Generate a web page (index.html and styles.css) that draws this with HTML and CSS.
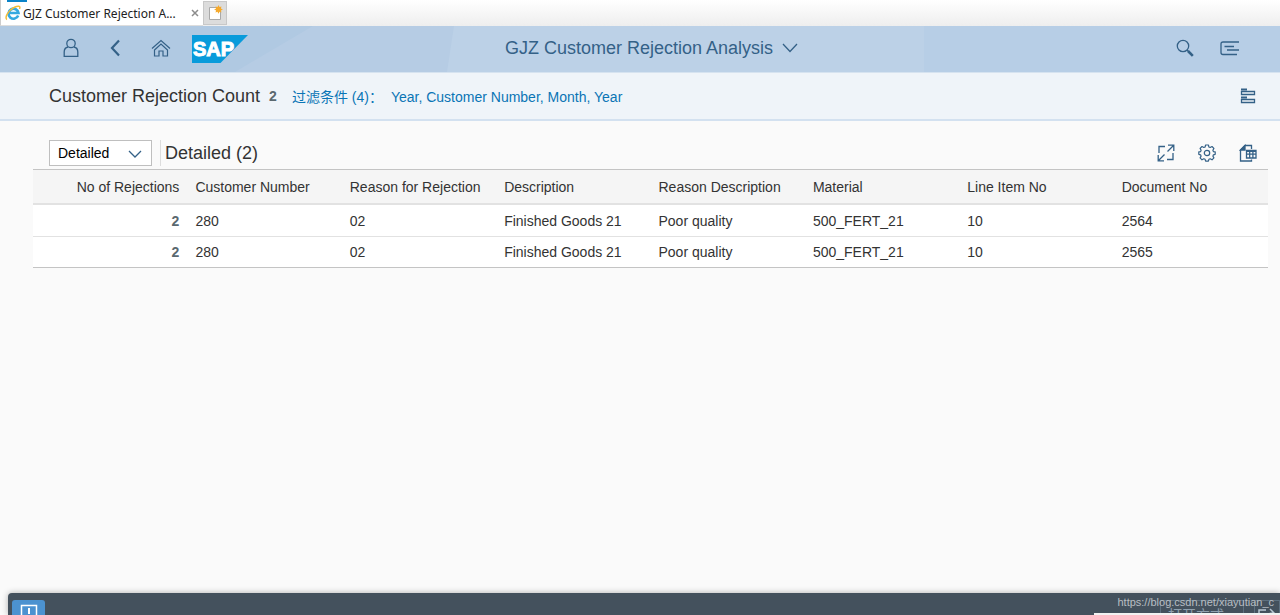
FILE: index.html
```
<!DOCTYPE html>
<html lang="en">
<head>
    <meta charset="UTF-8">
    <meta name="viewport" content="width=device-width, initial-scale=1.0">
    <title>GJZ Customer Rejection Analysis</title>
    <link rel="stylesheet" href="styles.css">
</head>
<body>

    <!-- Browser tabs -->
    <div class="tabs">
        <div class="tab">
            <svg width="16" height="16" viewBox="0 0 16 16">
                <path d="M13.2 10.5A5 5 0 1 1 13.5 8H4" fill="none" stroke="#35a9e0" stroke-width="2.6"/>
                <path d="M2 14.5C-1 13 3.500 5 9 2.500C13 .5 16 .5 14.500 4" fill="none" stroke="#f3bd35" stroke-width="1.500"/>
            </svg>
            <span class="tab-title">GJZ Customer Rejection A...</span>
            <button class="tab-close" aria-label="Close tab">
                <svg width="8" height="8" viewBox="0 0 8 8"><path d="M1 1l6 6M7 1L1 7" stroke="#8c8c8c" stroke-width="1.500"/></svg>
            </button>
        </div>
        <button class="tab-new" aria-label="New tab">
            <svg width="16" height="16" viewBox="0 0 16 16">
                <path d="M2.500 2.500h11v12h-11z" fill="#fff" stroke="#a9a9a9"/>
                <path d="M11.500 0l1 2 2-.6-.6 2 2 1-2 1 .6 2-2-.6-1 2-1-2-2 .6.6-2-2-1 2-1-.6-2 2 .6z" fill="#f5a92c"/>
            </svg>
        </button>
    </div>

    <!-- Shell header -->
    <header class="shell">
        <svg class="shell-bg" viewBox="0 0 1280 46" preserveAspectRatio="none">
            <path d="M0 0h1280v46H0z" fill="#b7cee6"/>
            <path d="M0 0h924v46H0z" fill="#bcd1e7"/>
            <path d="M0 0h454l-7 46H0z" fill="#b6cce4"/>
            <path d="M0 0h313L235 46H0z" fill="#b0c9e2"/>
        </svg>
        <nav class="shell-left">
            <button class="icon" aria-label="User">
                <svg width="16" height="20" viewBox="0 0 16 20" fill="none" stroke="#346187" stroke-width="1.300">
                    <circle cx="8" cy="5.500" r="4.200"/>
                    <path d="M5 9C2.500 9.500 1.200 11.500 1.200 14v4.300h13.600V14c0-2.500-1.300-4.500-3.800-5"/>
                </svg>
            </button>
            <button class="icon" aria-label="Back">
                <svg width="10" height="18" viewBox="0 0 10 18"><path d="M9 1.500L2 9l7 7.500" fill="none" stroke="#346187" stroke-width="2.200"/></svg>
            </button>
            <button class="icon" aria-label="Home">
                <svg width="20" height="18" viewBox="0 0 20 18" fill="none" stroke="#346187" stroke-width="1.200">
                    <path d="M1 9.500L10 1.500l9 8"/>
                    <path d="M3.500 11L10 5l6.500 6v6H12v-5H8v5H3.500z"/>
                </svg>
            </button>
            <svg class="logo" width="56" height="28" viewBox="0 0 56 28">
                <path d="M0 0h56L28.500 28H0z" fill="#089bdb"/>
                <text x="1" y="21" class="logo-text">SAP</text>
            </svg>
        </nav>
        <button class="shell-title">
            GJZ Customer Rejection Analysis
            <svg width="16" height="10" viewBox="0 0 16 10"><path d="M1 1l7 7.500L15 1" fill="none" stroke="#346187" stroke-width="1.300"/></svg>
        </button>
        <div class="shell-right">
            <button class="icon" aria-label="Search">
                <svg width="18" height="18" viewBox="0 0 18 18" fill="none" stroke="#346187">
                    <circle cx="7" cy="7" r="5.700" stroke-width="1.300"/>
                    <path d="M11 11l1.500 1.500" stroke-width="1.300"/>
                    <path d="M12 12l4.800 4.800" stroke-width="2.600"/>
                </svg>
            </button>
            <button class="icon" aria-label="Notifications">
                <svg width="20" height="16" viewBox="0 0 20 16" fill="none" stroke="#346187" stroke-width="1.300">
                    <path d="M19 2H3Q1 2 1 4v8.500q0 2 2 2h14"/>
                    <path d="M4.500 6.500H14M7 10h12"/>
                </svg>
            </button>
        </div>
    </header>

    <!-- Filter bar -->
    <section class="filter-bar">
        <h1>Customer Rejection Count</h1>
        <span class="count">2</span>
        <a href="#" class="filter-link"><span>过滤条件 (4)：</span>Year, Customer Number, Month, Year</a>
        <button class="icon icon-end" aria-label="Show filters">
            <svg width="16" height="16" viewBox="0 0 16 16" fill="none" stroke="#346187" stroke-width="1.300">
                <path d="M1 1.500h6M1 9.500h6" stroke-width="2"/>
                <path d="M1.500 3.500h13v3h-13zM1.500 11.500h13v3h-13z"/>
            </svg>
        </button>
    </section>

    <main class="content">
        <div class="toolbar">
            <div class="view-select">
                <select aria-label="View">
                    <option>Detailed</option>
                </select>
                <svg width="14" height="8" viewBox="0 0 14 8"><path d="M1 1l6 6 6-6" fill="none" stroke="#346187" stroke-width="1.300"/></svg>
            </div>
            <h2>Detailed (2)</h2>
            <div class="tools">
                <button class="icon" aria-label="Full screen">
                    <svg width="18" height="18" viewBox="0 0 18 18" fill="none" stroke="#346187" stroke-width="1.300">
                        <path d="M8 2.500H2V9M10 15.500h6V9"/>
                        <path d="M10.500 7.500L16.500 1.500M11 1.200h5.800V7M7.500 10.500L1.500 16.500M1.200 11v5.800H7"/>
                    </svg>
                </button>
                <button class="icon" aria-label="Settings">
                    <svg width="18" height="18" viewBox="0 0 18 18" fill="none" stroke="#346187" stroke-width="1.200" stroke-linejoin="round">
                        <circle cx="9" cy="9" r="2.700"/>
                        <path d="M7.600 1h2.800l.5 2 1.300.5 1.800-1 1.900 1.900-1 1.800.5 1.400 1.800.3v2.400l-1.800.5-.5 1.300 1 1.800-1.900 1.900-1.800-1-1.300.5-.5 1.800H7.600l-.5-1.800-1.300-.5-1.800 1-1.900-1.900 1-1.800-.5-1.300-1.800-.5V7.900l1.800-.3.5-1.400-1-1.800L4 2.500l1.800 1L7.100 3z"/>
                    </svg>
                </button>
                <button class="icon" aria-label="Export to spreadsheet">
                    <svg width="18" height="18" viewBox="0 0 18 18" fill="none" stroke="#346187" stroke-width="1.300">
                        <path d="M12.500 15.500v1.500H1.500V6L6 1.500h6.500V5"/>
                        <path d="M1.500 6L6 1.500V6z" fill="#346187"/>
                        <path d="M7.500 6.500h9.500v7.500H7.500zM7.500 10.200H17M10.700 7v7M13.900 7v7"/>
                        <path d="M7.500 7H17" stroke-width="2"/>
                    </svg>
                </button>
            </div>
        </div>

        <table class="grid">
            <thead>
                <tr>
                    <th class="num">No of Rejections</th>
                    <th>Customer Number</th>
                    <th>Reason for Rejection</th>
                    <th>Description</th>
                    <th>Reason Description</th>
                    <th>Material</th>
                    <th>Line Item No</th>
                    <th>Document No</th>
                </tr>
            </thead>
            <tbody>
                <tr>
                    <td class="num">2</td>
                    <td>280</td>
                    <td>02</td>
                    <td>Finished Goods 21</td>
                    <td>Poor quality</td>
                    <td>500_FERT_21</td>
                    <td>10</td>
                    <td>2564</td>
                </tr>
                <tr>
                    <td class="num">2</td>
                    <td>280</td>
                    <td>02</td>
                    <td>Finished Goods 21</td>
                    <td>Poor quality</td>
                    <td>500_FERT_21</td>
                    <td>10</td>
                    <td>2565</td>
                </tr>
            </tbody>
        </table>
    </main>

    <!-- Footer, cut off by the window edge -->
    <footer class="footer">
        <button class="message" aria-label="Messages">
            <svg width="18" height="18" viewBox="0 0 18 18" fill="none" stroke="#fff" stroke-width="1.500">
                <path d="M1.500 1.500h15v15h-15z"/>
                <path d="M9 4v6M9 12v2" stroke-width="2"/>
            </svg>
        </button>
        <div class="footer-actions">
            <button class="open-in">打开方式</button>
            <button class="share" aria-label="Share">
                <svg width="24" height="16" viewBox="0 0 24 16" fill="none" stroke="#b9c8d4" stroke-width="1.500">
                    <path d="M11 3H4v12M10 14c1-5 3-8 8-8M15 2l4 4-4 4"/>
                </svg>
            </button>
        </div>
        <span class="watermark">https://blog.csdn.net/xiayutian_c</span>
        <div class="popup"></div>
    </footer>

</body>
</html>
```
FILE: styles.css
```
* {
    box-sizing: border-box;
}

body {
    font-family: "Liberation Sans", Arial, "Noto Sans CJK SC", sans-serif;
    font-size: 14px;
    color: #333;
    margin: 0;
    height: 100vh;
    display: flex;
    flex-direction: column;
    overflow: hidden;
    background-color: #fafafa;
}

h1, h2 {
    margin: 0;
    font-size: 18px;
    font-weight: normal;
}

button {
    font-family: inherit;
    padding: 0;
    border: 0;
    background: none;
}

svg {
    display: block;
    flex: none;
}

.icon {
    display: flex;
}

/* Browser tabs */
.tabs {
    height: 26px;
    flex: none;
    display: flex;
    background: linear-gradient(#fff, #eee);
}

.tab {
    width: 203px;
    display: flex;
    align-items: center;
    padding: 1px 4px 0;
    background: linear-gradient(to right, #0a83c8 20px, transparent 20px) 6px 0 / 20px 2px no-repeat #fff;
    border-left: 1px solid #ccc;
    border-bottom: 1px solid #ddd;
}

.tab-title {
    font-family: "Noto Sans", "Open Sans", sans-serif;
    font-size: 12px;
    color: #222;
    margin-left: 2px;
    white-space: nowrap;
}

.tab-close {
    margin-left: auto;
}

.tab-new {
    width: 24px;
    margin: 1px 0;
    display: flex;
    align-items: center;
    justify-content: center;
    background-color: #dcdcdc;
    border: 1px solid #c8c8c8;
}

/* Shell header */
.shell {
    position: relative;
    height: 46px;
    flex: none;
    display: grid;
    grid-template-columns: 1fr auto 1fr;
    align-items: center;
    padding: 0 40px 2px 63px;
}

.shell-bg {
    position: absolute;
    top: 0;
    left: 0;
    width: 100%;
    height: 100%;
    z-index: -1;
}

.shell-left {
    display: flex;
    align-items: center;
    gap: 31px;
}

.logo {
    margin: 2px 0 0 -10px;
}

.logo-text {
    font-size: 20px;
    font-weight: bold;
    fill: #fff;
    stroke: #fff;
}

.shell-title {
    display: flex;
    align-items: center;
    gap: 9px;
    font-size: 18px;
    color: #346187;
}

.shell-right {
    display: flex;
    align-items: center;
    justify-content: flex-end;
    gap: 26px;
}

/* Filter bar */
.filter-bar {
    height: 49px;
    flex: none;
    display: flex;
    align-items: center;
    padding: 0 24px 0 49px;
    background-color: #eff4f9;
    border-top: 1px solid #d6e3f0;
    border-bottom: 2px solid #d3e1f0;
}

.count {
    margin: 0 15px 0 9px;
    font-weight: bold;
    color: #5a686f;
}

.filter-link {
    display: flex;
    align-items: baseline;
    gap: 8px;
    color: #0a75b5;
    text-decoration: none;
}

.icon-end {
    margin-left: auto;
}

/* Table */
.content {
    flex: 1;
    padding: 15px 12px 0 33px;
}

.toolbar {
    height: 33px;
    display: flex;
    align-items: center;
    padding: 0 11px 0 16px;
}

.view-select {
    position: relative;
    width: 103px;
}

.view-select select {
    width: 100%;
    height: 26px;
    padding: 0 8px;
    font-family: inherit;
    font-size: 14px;
    color: #000;
    background-color: #fff;
    border: 1px solid #bfbfbf;
    border-radius: 0;
    appearance: none;
}

.view-select svg {
    position: absolute;
    top: 10px;
    right: 10px;
    pointer-events: none;
}

.toolbar h2 {
    margin-left: 8px;
    padding-left: 4px;
    border-left: 1px solid #ddd;
    line-height: 26px;
}

.tools {
    margin-left: auto;
    display: flex;
    gap: 23px;
}

.grid {
    width: 100%;
    table-layout: fixed;
    border-collapse: separate;
    border-spacing: 0;
    border-top: 1px solid #c4c4c4;
}

.grid th, .grid td {
    padding: 0 8px;
    text-align: left;
    white-space: nowrap;
}

.grid th {
    height: 35px;
    font-weight: normal;
    background-color: #f5f5f5;
    border-bottom: 2px solid #e2e2e2;
}

.grid td {
    height: 32px;
    background-color: #fff;
    border-bottom: 1px solid #e2e2e2;
}

.grid tbody tr:last-child td {
    height: 31px;
    border-bottom-color: #c4c4c4;
}

.grid .num {
    text-align: right;
}

.grid td.num {
    font-weight: bold;
    color: #5a686f;
}

/* Footer */
.footer {
    position: relative;
    height: 22px;
    flex: none;
    margin-left: 8px;
    padding: 7px 0 0 4px;
    display: flex;
    align-items: flex-start;
    justify-content: space-between;
    overflow: hidden;
    background-color: #44515d;
    border-radius: 4px 0 0 0;
    box-shadow: 0 0 6px rgba(0, 0, 0, 0.3);
}

.message {
    width: 33px;
    height: 30px;
    padding-top: 4px;
    display: flex;
    justify-content: center;
    background-color: #4c92d0;
    border-radius: 3px;
}

.footer-actions {
    display: flex;
    gap: 10px;
}

.footer-actions button {
    height: 30px;
    border: 1px solid #5d7080;
}

.open-in {
    width: 84px;
    padding-right: 12px;
    font-size: 14px;
    line-height: 20px;
    color: #8fa0ae;
}

.watermark {
    position: absolute;
    top: 3px;
    right: 6px;
    font-size: 11px;
    color: #b8bec3;
}

.popup {
    position: absolute;
    bottom: 0;
    right: 0;
    width: 186px;
    height: 2px;
    background-color: #f2f2f2;
}
```
